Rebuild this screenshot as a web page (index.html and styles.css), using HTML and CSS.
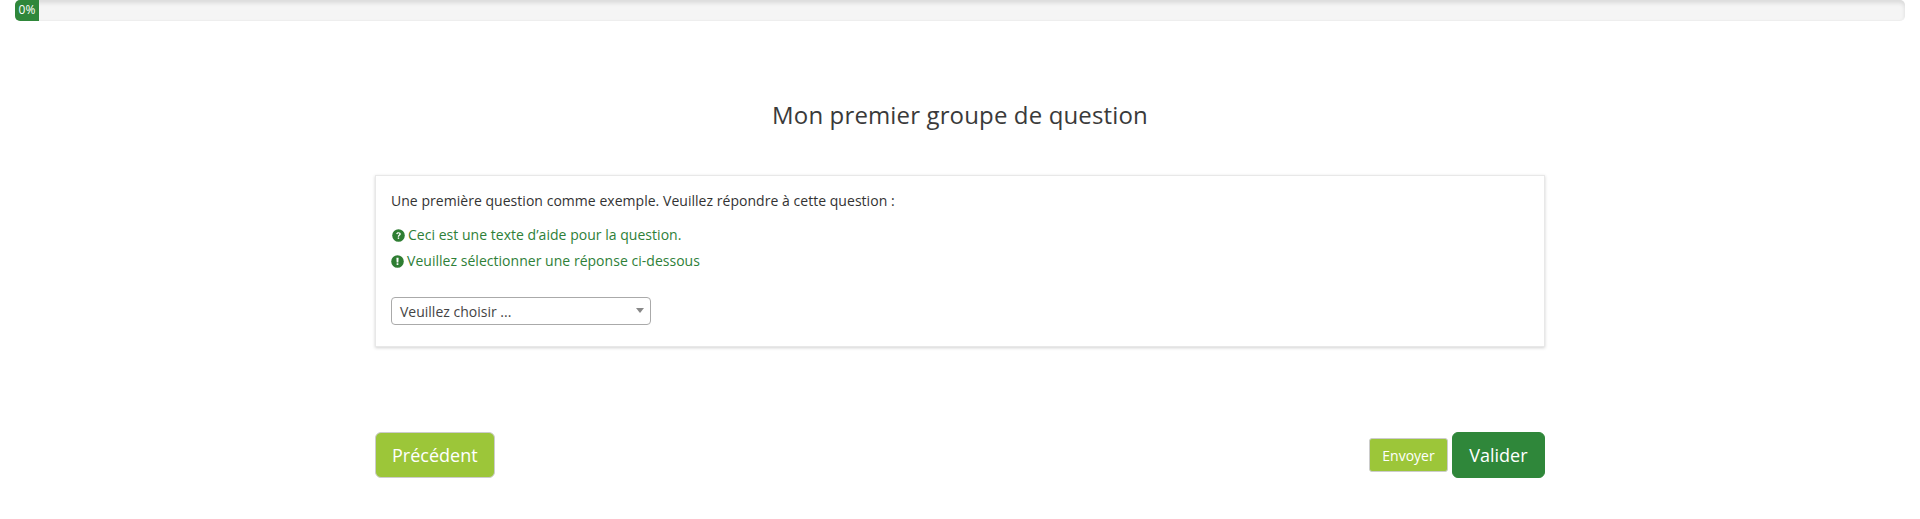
FILE: index.html
```html
<!DOCTYPE html>
<html lang="fr">
  <head>
    <meta charset="utf-8">
    <title>Mon premier groupe de question</title>
    <link rel="stylesheet" href="styles.css">
  </head>
  <body>
    <div class="progress">
      <div class="progress-bar">0%</div>
    </div>
    <div class="page">
      <h1 class="group-title">Mon premier groupe de question</h1>
      <div class="question">
        <div class="question-text">Une première question comme exemple. Veuillez répondre à cette question :</div>
        <div class="help-line help-first">
          <svg class="help-icon" viewBox="0 0 12 12">
            <circle cx="6" cy="6" r="5.8" fill="#2e7d32"/>
            <path d="M3.9 4.7C4 3.5 4.9 2.9 6 2.9c1.2 0 2.1.7 2.1 1.7 0 1.5-1.6 1.4-1.6 2.5H5.3c0-1.7 1.5-1.6 1.5-2.5 0-.4-.3-.6-.8-.6s-.8.3-.9.8z" fill="#fff"/>
            <rect x="5.3" y="7.8" width="1.3" height="1.3" fill="#fff"/>
          </svg>
          <span>Ceci est une texte d’aide pour la question.</span>
        </div>
        <div class="help-line help-second">
          <svg class="help-icon" viewBox="0 0 12 12">
            <circle cx="6" cy="6" r="5.8" fill="#2e7d32"/>
            <path d="M5 2.6h2l-.2 4.3H5.2z" fill="#fff"/>
            <rect x="5.2" y="7.6" width="1.6" height="1.6" fill="#fff"/>
          </svg>
          <span>Veuillez sélectionner une réponse ci-dessous</span>
        </div>
        <div class="select-box">
          <span>Veuillez choisir ...</span>
          <span class="select-arrow"></span>
        </div>
      </div>
      <div class="nav">
        <button class="btn btn-lime">Précédent</button>
        <div class="nav-right">
          <button class="btn btn-lime btn-small">Envoyer</button>
          <button class="btn btn-green">Valider</button>
        </div>
      </div>
    </div>
  </body>
</html>
```

FILE: styles.css
```css
html, body {
  height: 100%;
}
body {
  margin: 0;
  font-family: "Open Sans", sans-serif;
  font-size: 14px;
  color: #333;
  background-color: #fff;
}
.progress {
  height: 21px;
  margin: 0 15px;
  background-color: #f5f5f5;
  border-radius: 5px;
  box-shadow: inset 0 3px 4px rgba(0, 0, 0, 0.11);
  border-bottom: 1px solid #eee;
  box-sizing: border-box;
}
.progress-bar {
  width: 24px;
  height: 21px;
  line-height: 19px;
  font-size: 12px;
  text-align: center;
  color: #fff;
  background-color: #2f873a;
  border-radius: 5px 0 0 5px;
}
.page {
  width: 1170px;
  margin: 0 auto;
}
.group-title {
  margin: 0;
  padding-top: 76px;
  font-size: 24px;
  font-weight: 400;
  line-height: 36px;
  letter-spacing: 0.14px;
  text-align: center;
  color: #3a3a3a;
}
.question {
  margin-top: 42px;
  height: 172px;
  box-sizing: border-box;
  padding: 15px;
  border: 1px solid #e8e8e8;
  box-shadow: 0 1px 3px rgba(0, 0, 0, 0.18);
}
.question-text {
  line-height: 20px;
  letter-spacing: 0.035px;
}
.help-line {
  display: flex;
  align-items: center;
  line-height: 20px;
  letter-spacing: 0.03px;
  color: #2e8038;
}
.help-first {
  margin-top: 14px;
  padding-left: 1px;
}
.help-second {
  margin-top: 6px;
}
.help-icon {
  width: 13px;
  height: 13px;
  margin-right: 3px;
}
.select-box {
  display: flex;
  justify-content: space-between;
  align-items: center;
  width: 260px;
  height: 28px;
  margin-top: 26px;
  padding: 0 6px 0 8px;
  box-sizing: border-box;
  border: 1px solid #aaa;
  border-radius: 4px;
  color: #444;
}
.select-arrow {
  width: 0;
  height: 0;
  margin-top: -2px;
  border-left: 4px solid transparent;
  border-right: 4px solid transparent;
  border-top: 5px solid #888;
}
.nav {
  display: flex;
  justify-content: space-between;
  align-items: center;
  margin-top: 85px;
}
.nav-right {
  display: flex;
  align-items: center;
  gap: 4px;
}
.btn {
  font-family: "Open Sans", sans-serif;
  font-size: 18px;
  color: #fff;
  height: 46px;
  padding: 0 16px;
  border-radius: 6px;
  border: 1px solid #ccc;
  cursor: pointer;
}
.btn-lime {
  background-color: #9cc639;
}
.btn-green {
  padding: 0 16.5px;
  background-color: #2f873a;
  border-color: #2f873a;
}
.btn-small {
  font-size: 14px;
  height: 34px;
  padding: 0 12px;
  border-radius: 3px;
}
```
